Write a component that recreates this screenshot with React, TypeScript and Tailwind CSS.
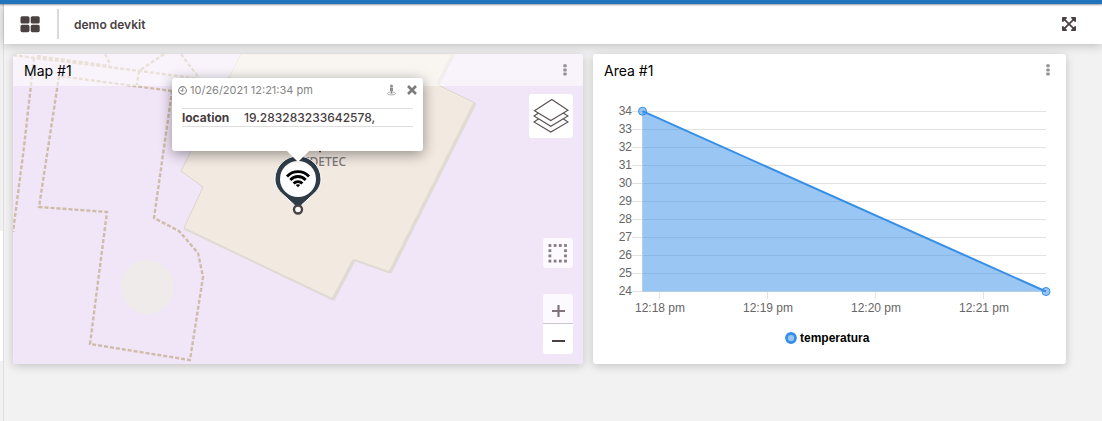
import { useState } from "react";
import { FaExpandArrowsAlt } from "react-icons/fa";

const yTicks = [34, 33, 32, 31, 30, 29, 28, 27, 26, 25, 24];
const xTicks = [
  { label: "12:18 pm", x: 67 },
  { label: "12:19 pm", x: 175 },
  { label: "12:20 pm", x: 283 },
  { label: "12:21 pm", x: 391 },
];

function GridIcon() {
  return (
    <svg viewBox="0 0 20 17" className="h-[17px] w-5" fill="currentColor" aria-hidden="true">
      <rect x="0.5" y="0.2" width="9" height="7.4" rx="1.6" />
      <rect x="10.7" y="0.2" width="9" height="7.4" rx="1.6" />
      <rect x="0.5" y="8.8" width="9" height="7.4" rx="1.6" />
      <rect x="10.7" y="8.8" width="9" height="7.4" rx="1.6" />
    </svg>
  );
}

function DotsIcon() {
  return (
    <svg viewBox="0 0 4 12" className="h-3 w-1" fill="#939393" aria-hidden="true">
      <rect x="0.3" y="0.3" width="3.4" height="3" rx="0.7" />
      <rect x="0.3" y="4.4" width="3.4" height="3" rx="0.7" />
      <rect x="0.3" y="8.5" width="3.4" height="3" rx="0.7" />
    </svg>
  );
}

function LayersIcon() {
  return (
    <svg viewBox="0 0 36 36" className="size-9" fill="#fff" stroke="#5a5254" strokeWidth="1.2" aria-hidden="true">
      <path d="M1 24 17.8 12.5 35 24 17.8 34Z" />
      <path d="M1 18 17.8 7 35 18 17.8 28.2Z" />
      <path d="M1.5 12.8 18.8 1.4 35 12.2 17.8 22.6Z" />
    </svg>
  );
}

function SelectAreaIcon() {
  const steps = [0, 1, 2, 3];
  return (
    <svg viewBox="0 0 20 20" className="size-5" fill="#857a80" aria-hidden="true">
      {steps.flatMap((r) =>
        steps
          .filter((c) => r === 0 || r === 3 || c === 0 || c === 3)
          .map((c) => <rect key={`${r}${c}`} x={0.5 + c * 5.2} y={1.1 + r * 5.2} width="2.8" height="2.8" />),
      )}
    </svg>
  );
}

function StreetViewIcon() {
  return (
    <svg viewBox="0 0 10 12" className="h-3 w-2.5" fill="#8c8c8c" aria-hidden="true">
      <circle cx="5.5" cy="1.9" r="1.5" />
      <path d="M4 3.8h3v3.1h-.6V9.8H4.600V6.900H4z" />
      <path d="M3.900 8.100C2.400 8.400 1.500 8.900 1.500 9.500c0 .8 1.800 1.400 4 1.400s4-.6 4-1.400c0-.6-.9-1.100-2.400-1.400" fill="none" stroke="#a5a5a5" strokeWidth=".9" />
    </svg>
  );
}

function CloseIcon() {
  return (
    <svg viewBox="0 0 10 10" className="size-2.5" stroke="#7b7b7b" strokeWidth="2.6" aria-hidden="true">
      <path d="M1 1l8 8M9 1 1 9" />
    </svg>
  );
}

function ClockIcon() {
  return (
    <svg viewBox="0 0 10 10" className="size-[9px]" fill="none" stroke="#858585" strokeWidth="1.2" aria-hidden="true">
      <circle cx="5" cy="5" r="4.3" />
      <path d="M5.3 2.4v3H3" />
    </svg>
  );
}

function MapDrawing() {
  return (
    <svg
      viewBox="0 0 570 310"
      preserveAspectRatio="xMidYMid slice"
      className="absolute inset-0 h-full w-full"
      role="img"
      aria-label="Map"
    >
      <rect width="570" height="310" fill="#f1e6f8" />
      <circle cx="134.5" cy="233" r="27" fill="#efebeb" />
      <path
        d="M228 0 177 99 168 117 190 133 171 174 320 246 341 206 377 219 462 49 425 31 441 0Z"
        fill="#f2e9e0"
        stroke="#ddd3cd"
        strokeWidth="1"
      />
      <path d="M171 174.5 320 245.5M341 206 377 218.5" fill="none" stroke="#dfdad4" strokeWidth="2" />
      <path d="M320 245.5 341 206M377 218.5 462 49M425 30 441 -1" fill="none" stroke="#dfdad4" strokeWidth="3.5" />
      <g fill="none" stroke="#cfbca8" strokeWidth="2.4" strokeDasharray="4 2">
        <path d="M0 1 22 4 127 17 217 29" />
        <path d="M24 2 97 12" />
        <path d="M92 0 97 10" />
        <path d="M151 0 126 17 124 31" />
        <path d="M168 0 186 24" />
        <path d="M21 4 11 93 0 178" />
        <path d="M218 24 200 27M159 37 46 22 26 153 94 158 77 290 177 306 190 223 185 199 166 177 141 164 159 37" />
      </g>
      <path d="M307 95v3.2" stroke="#4a4143" strokeWidth="2" />
      <text
        x="333"
        y="112"
        textAnchor="end"
        fill="#7c7878"
        fontSize="12"
        fontWeight="500"
        fontFamily="'Noto Sans', 'Open Sans', sans-serif"
      >
        CIDETEC
      </text>
    </svg>
  );
}

function Marker() {
  return (
    <svg viewBox="0 0 48 62" className="h-[62px] w-12" role="img" aria-label="Device marker">
      <path
        d="M24 1C11.5 1 1 11.2 1 24c0 7 3.500 11.500 8 15.500l11.500 10.500 1.500 3h4l1.500-3L39 39.500c4.500-4 8-8.500 8-15.500C47 11.200 36.500 1 24 1Z"
        fill="#2f3c48"
        stroke="#fff"
        strokeWidth="1"
      />
      <circle cx="24" cy="24" r="18" fill="#fff" />
      <circle cx="24" cy="54.500" r="4" fill="#fff" stroke="#4a4143" strokeWidth="2.4" />
      <g fill="none" stroke="#000" strokeWidth="2.8">
        <path d="M13 21.5C19 15 29 15 35 21.5" />
        <path d="M16.3 25C20.5 20.3 27.5 20.3 31.7 25" />
        <path d="M19.6 28.5C22 25.9 26 25.9 28.4 28.5" />
      </g>
      <path d="M21.8 29.9C23 29 25 29 26.2 29.9L24 32.3Z" fill="#000" />
    </svg>
  );
}

function DevicePopup({ onClose }: { onClose: () => void }) {
  return (
    <div className="relative w-[251px] rounded-[3px] bg-white pb-6 shadow-[0_3px_14px_rgba(0,0,0,0.4)]">
      <div className="flex h-6 items-center gap-[3px] pl-1.5 pr-1.5 text-[11px] text-[#858585]">
        <ClockIcon />
        <time className="grow">10/26/2021 12:21:34 pm</time>
        <button type="button" aria-label="Street view" className="mr-2">
          <StreetViewIcon />
        </button>
        <button type="button" aria-label="Close" onClick={onClose}>
          <CloseIcon />
        </button>
      </div>
      <div className="px-2.5 pt-1.5">
        <table className="w-full border-y border-[#dedede] text-left text-[12px] leading-[17px] text-[#453c3e]">
          <tbody>
            <tr>
              <th scope="row" className="w-[62px] p-0 font-bold">location</th>
              <td className="p-0 font-medium">19.283283233642578,</td>
            </tr>
          </tbody>
        </table>
      </div>
      <svg viewBox="0 0 22 11" className="absolute left-[115px] top-full h-[11px] w-[22px]" aria-hidden="true">
        <path d="M0 0h22L11 11Z" fill="#fff" />
      </svg>
    </div>
  );
}

function MapCard() {
  const [open, setOpen] = useState(true);
  return (
    <section className="relative flex min-h-[310px] flex-col overflow-hidden rounded-[3px] shadow-[0_2px_10px_rgba(0,0,0,0.2)]">
      <MapDrawing />
      <header className="relative flex h-8 items-center justify-between bg-white/55 pl-[11px] pr-4">
        <h2 className="pt-0.5 text-[14px] leading-5 text-black">Map #1</h2>
        <button type="button" aria-label="Map options">
          <DotsIcon />
        </button>
      </header>
      <div className="absolute left-[261px] top-[101px]">
        <Marker />
      </div>
      {open && (
        <div className="absolute left-[159px] top-6">
          <DevicePopup onClose={() => setOpen(false)} />
        </div>
      )}
      <div className="relative flex grow flex-col items-end self-end px-2.5 pb-2.5 pt-2">
        <button type="button" aria-label="Layers" className="flex size-11 items-center justify-center rounded-[3px] bg-white">
          <LayersIcon />
        </button>
        <button
          type="button"
          aria-label="Select area"
          className="mt-auto flex size-[30px] items-center justify-center rounded-[3px] bg-white/80"
        >
          <SelectAreaIcon />
        </button>
        <div className="mt-[26px] flex w-[30px] flex-col">
          <button type="button" aria-label="Zoom in" className="flex h-[30px] items-center justify-center rounded-t-[3px] border-b border-[#ccc5d0] bg-white/80 pt-1">
            <svg viewBox="0 0 14 14" className="size-3.5" stroke="#80757b" strokeWidth="2.2" aria-hidden="true">
              <path d="M1 7h13M7.5 1v12" />
            </svg>
          </button>
          <button type="button" aria-label="Zoom out" className="flex h-[30px] items-center justify-center rounded-b-[3px] bg-white pt-1">
            <svg viewBox="0 0 14 14" className="size-3.5" stroke="#4a4043" strokeWidth="2" aria-hidden="true">
              <path d="M1 7h13" />
            </svg>
          </button>
        </div>
      </div>
    </section>
  );
}

function AreaCard() {
  return (
    <section className="flex min-h-[310px] flex-col rounded-[3px] bg-white shadow-[0_2px_10px_rgba(0,0,0,0.2)]">
      <header className="flex h-8 items-center justify-between pl-[11px] pr-4">
        <h2 className="pt-0.5 text-[14px] leading-5 text-black">Area #1</h2>
        <button type="button" aria-label="Chart options">
          <DotsIcon />
        </button>
      </header>
      <svg
        viewBox="0 0 473 278"
        className="h-auto w-full"
        role="img"
        aria-label="temperatura by time"
        fontFamily="'Liberation Sans', Arial, sans-serif"
        fontSize="12"
      >
        {yTicks.map((t, i) => (
          <g key={t}>
            <path d={`M39 ${25.5 + i * 18}H453`} stroke="#e2e2e2" />
            <text x="39" y={29 + i * 18} textAnchor="end" fill="#666">
              {t}
            </text>
          </g>
        ))}
        <path d="M49.5 25V206" stroke="#e2e2e2" />
        {xTicks.map(({ label, x }) => (
          <g key={label}>
            <path d={`M${x - 0.5} 206V213`} stroke="#e2e2e2" />
            <text x={x} y="226" textAnchor="middle" fill="#666">
              {label}
            </text>
          </g>
        ))}
        <path d="M49.5 25.2 453 205.5H49.5Z" fill="#368ee7" fillOpacity=".5" />
        <path d="M49.5 25.2 453 205.5" stroke="#368ee7" strokeWidth="2" />
        <g fill="#368ee7" fillOpacity=".5" stroke="#368ee7" strokeWidth="1">
          <circle cx="49.5" cy="25.2" r="4" />
          <circle cx="453" cy="205.5" r="4" />
        </g>
        <circle cx="198" cy="252" r="4.5" fill="#9ac6f3" stroke="#368ee7" strokeWidth="2.8" />
        <text x="207" y="256" fontWeight="700" fill="#000">
          temperatura
        </text>
      </svg>
    </section>
  );
}

export default function App() {
  return (
    <div className="flex min-h-screen flex-col bg-[#f2f2f2] font-['Inter',sans-serif]">
      <div className="relative z-10 h-1 bg-[#2075bc] shadow-[0_1px_2px_rgba(0,0,0,0.4)]" />
      <div className="flex grow">
        <aside className="flex w-1 shrink-0 flex-col border-r border-[#dddddd] bg-[#f1f1f1]">
          <div className="mt-[227px] h-[130px] bg-white" />
        </aside>
        <div className="flex grow flex-col">
          <nav className="flex h-10 items-center bg-white pl-4 pr-[25px] text-[#4a4143] shadow-[0_1px_10px_rgba(0,0,0,0.25)]">
            <button type="button" aria-label="Dashboards">
              <GridIcon />
            </button>
            <div className="ml-[17px] h-[30px] w-0.5 bg-[#dadada]" />
            <h1 className="ml-[15px] grow pt-0.5 text-[12px] font-semibold">demo devkit</h1>
            <button type="button" aria-label="Full screen">
              <FaExpandArrowsAlt size={16} />
            </button>
          </nav>
          <main className="grid grid-cols-[570fr_473fr] gap-2.5 pb-14 pl-[9px] pr-9 pt-2.5">
            <MapCard />
            <AreaCard />
          </main>
        </div>
      </div>
    </div>
  );
}
